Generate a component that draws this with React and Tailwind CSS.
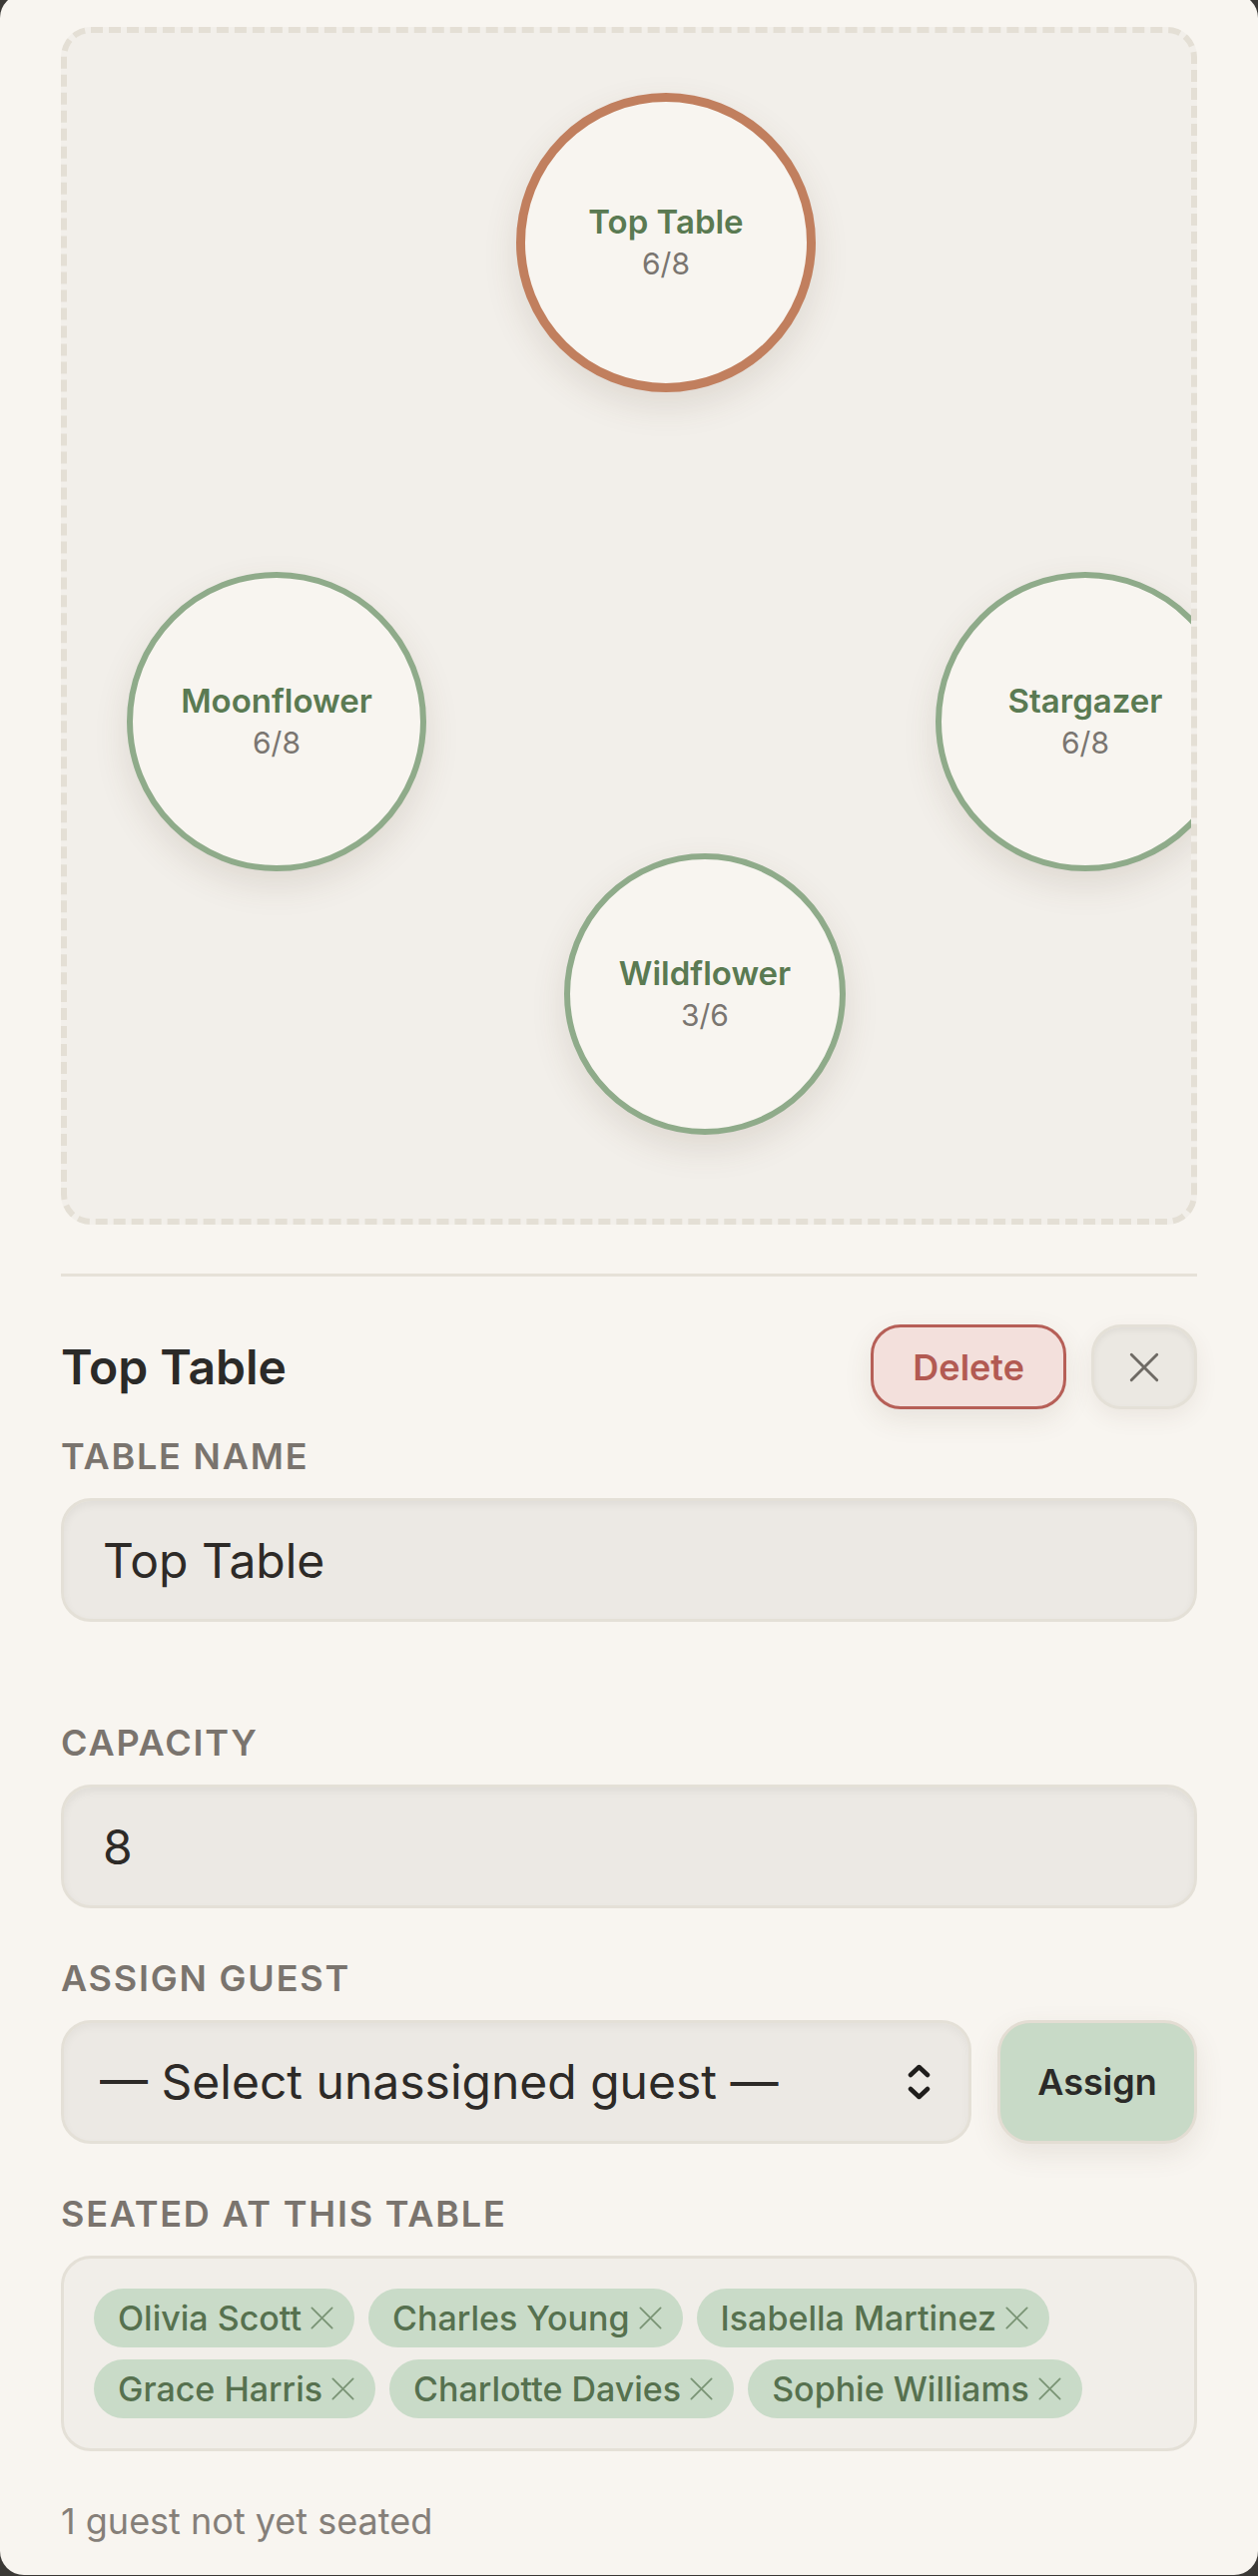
import { useState } from "react";

const tables = [
  { name: "Top Table", seated: 6, capacity: 8, cx: 600, cy: 210, size: 300, selected: true },
  { name: "Moonflower", seated: 6, capacity: 8, cx: 210, cy: 690, size: 300 },
  { name: "Stargazer", seated: 6, capacity: 8, cx: 1020, cy: 690, size: 300 },
  { name: "Wildflower", seated: 3, capacity: 6, cx: 639, cy: 963, size: 282 },
];

const seated = [
  "Olivia Scott",
  "Charles Young",
  "Isabella Martinez",
  "Grace Harris",
  "Charlotte Davies",
  "Sophie Williams",
];

const TableNode = ({ table }) => (
  <div
    className={
      "absolute rounded-full bg-[#f8f5f0] flex flex-col items-center justify-center shadow-[0_14px_34px_rgba(90,70,50,0.13)] " +
      (table.selected ? "border-[9px] border-[#c17f5e]" : "border-[6px] border-[#8fab8a]")
    }
    style={{
      left: table.cx - table.size / 2,
      top: table.cy - table.size / 2,
      width: table.size,
      height: table.size,
    }}
  >
    <span className="text-[33px] leading-[42px] font-semibold text-[#5a7a52]">{table.name}</span>
    <span className="text-[30px] leading-[42px] text-[#7a7570]">
      {table.seated}/{table.capacity}
    </span>
  </div>
);

const Label = ({ children, className = "" }) => (
  <div className={"text-[36px] leading-[48px] font-semibold tracking-[0.05em] uppercase text-[#7a746e] mb-[18px] " + className}>
    {children}
  </div>
);

const XIcon = ({ size = 26, stroke = 3, color = "currentColor" }) => (
  <svg width={size} height={size} viewBox="0 0 24 24" fill="none" stroke={color} strokeWidth={stroke} strokeLinecap="round">
    <path d="M3 3L21 21M21 3L3 21" />
  </svg>
);

const App = () => {
  const [guests, setGuests] = useState(seated);

  return (
    <div className="flow-root min-h-screen bg-[#3b3936] font-['Inter',sans-serif]">
      <div className="-mt-[6px] rounded-[24px] bg-[#f8f5f0] px-[61px] pt-[33px] pb-[30px]">
        <div className="relative h-[1200px] overflow-hidden rounded-[30px] border-[6px] border-dashed border-[#e4dfd5] bg-[#f2efea]">
          {tables.map((t) => (
            <TableNode key={t.name} table={t} />
          ))}
        </div>

        <div className="mt-[49px] h-[3px] bg-[#e6e1d8]" />

        <div className="mt-[48px] flex h-[85px] items-center justify-between">
          <h2 className="text-[48px] font-semibold text-[#2b2a28]">Top Table</h2>
          <div className="flex items-center gap-[25px]">
            <button className="h-[85px] rounded-[30px] border-[3px] border-[#b65f57] bg-[#f3e0dc] px-[39px] text-[36px] font-semibold text-[#b25a52] shadow-[0_10px_28px_rgba(90,70,50,0.10)]">
              Delete
            </button>
            <button className="flex h-[85px] w-[106px] items-center justify-center rounded-[30px] border-[3px] border-[#e4e0d7] bg-[#ebe8e2] text-[#6e6a64] shadow-[inset_0_3px_6px_rgba(0,0,0,0.05),0_8px_22px_rgba(90,70,50,0.08)]">
              <XIcon size={34} stroke={2} />
            </button>
          </div>
        </div>

        <Label className="mt-[23px]">Table Name</Label>
        <input
          defaultValue="Top Table"
          className="block h-[124px] w-full rounded-[30px] border-[3px] border-[#e4e0d7] bg-[#ece9e4] px-[39px] text-[48px] text-[#2d2a27] outline-none shadow-[inset_0_4px_8px_rgba(0,0,0,0.05)]"
        />

        <Label className="mt-[97px]">Capacity</Label>
        <input
          defaultValue="8"
          className="block h-[124px] w-full rounded-[30px] border-[3px] border-[#e4e0d7] bg-[#ece9e4] px-[39px] text-[48px] text-[#2d2a27] outline-none shadow-[inset_0_4px_8px_rgba(0,0,0,0.05)]"
        />

        <Label className="mt-[46px]">Assign Guest</Label>
        <div className="flex gap-[26px]">
          <div className="relative flex-1">
            <select className="block h-[124px] w-full appearance-none rounded-[30px] border-[3px] border-[#e4e0d7] bg-[#ece9e4] pl-[36px] pr-[90px] text-[48px] text-[#2d2a27] outline-none shadow-[inset_0_4px_8px_rgba(0,0,0,0.04)]">
              <option>— Select unassigned guest —</option>
            </select>
            <svg
              className="pointer-events-none absolute right-[40px] top-1/2 -translate-y-1/2"
              width="25"
              height="36"
              viewBox="0 0 25 36"
              fill="none"
              stroke="#1f1d1b"
              strokeWidth="4.5"
              strokeLinecap="round"
              strokeLinejoin="round"
            >
              <path d="M4 11L12.5 3L21 11" />
              <path d="M4 25L12.5 33L21 25" />
            </svg>
          </div>
          <button className="h-[124px] w-[200px] rounded-[33px] border-[3px] border-[#e3ddd3] bg-[#c8dac7] text-[36px] font-semibold text-[#2b2a28] shadow-[0_10px_28px_rgba(90,70,50,0.10)]">
            Assign
          </button>
        </div>

        <Label className="mt-[46px]">Seated at this table</Label>
        <div className="flex h-[196px] flex-wrap content-start gap-x-[14px] gap-y-[12px] rounded-[30px] border-[3px] border-[#e4e0d7] bg-[#f1eee9] px-[30px] pt-[30px]">
          {guests.map((g) => (
            <span
              key={g}
              className="flex h-[59px] items-center gap-[7px] rounded-full bg-[#c9dbc8] pl-[24px] pr-[19px] text-[34px] font-medium text-[#56714f]"
            >
              {g}
              <button onClick={() => setGuests(guests.filter((x) => x !== g))} className="text-[#7a9475]">
                <XIcon size={27} stroke={1.6} />
              </button>
            </span>
          ))}
        </div>

        <p className="mt-[46px] text-[36px] leading-[48px] text-[#857f79]">1 guest not yet seated</p>
      </div>
    </div>
  );
};

export default App;
